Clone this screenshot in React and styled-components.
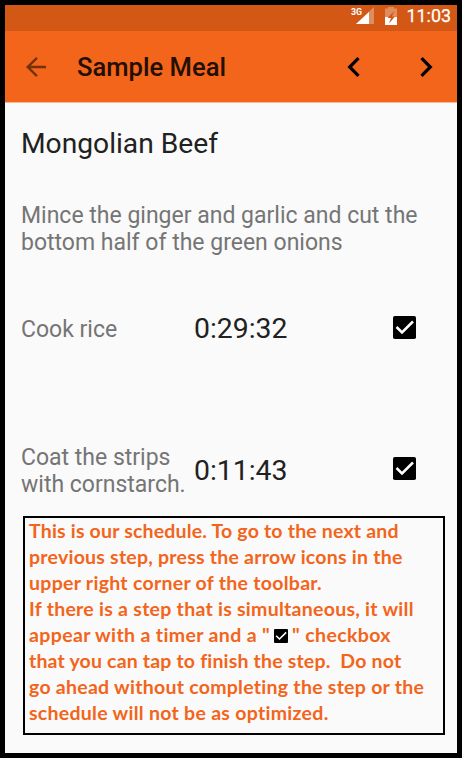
import React from 'react';
import styled, { createGlobalStyle } from 'styled-components';

const GlobalStyle = createGlobalStyle`
  body { margin: 0; background: #000; }
  * { box-sizing: border-box; }
`;

const Device = styled.div`
  width: 462px;
  height: 758px;
  border: 5px solid #000;
  background: #fafafa;
  font-family: Roboto, sans-serif;
  display: flex;
  flex-direction: column;
  overflow: hidden;
`;

const StatusBar = styled.div`
  flex: none;
  height: 26px;
  padding: 0 6px 4px 0;
  background: #d35815;
  color: #fff;
  display: flex;
  align-items: center;
  justify-content: flex-end;
`;

const StatusIcons = styled.svg`
  width: 47px;
  height: 20px;
  margin-right: 8px;
`;

const NetworkLabel = styled.text`
  font: 700 9.8px Roboto, sans-serif;
  fill: #fff;
`;

const Clock = styled.span`
  font-size: 17.9px;
  font-weight: 400;
  line-height: 22px;
  -webkit-text-stroke: 0.25px #fff;
`;

const Toolbar = styled.header`
  flex: none;
  height: 72px;
  padding: 0 20px 0 20px;
  background: #f2651a;
  border-bottom: 1px solid #f9b896;
  display: flex;
  align-items: center;
`;

const ToolbarIcon = styled.svg`
  width: 22px;
  height: 24px;
  flex: none;
  fill: none;
  stroke: ${(p) => (p.$muted ? '#74310e' : '#000')};
  stroke-width: ${(p) => (p.$muted ? 2.4 : 3.2)};
`;

const Title = styled.h1`
  flex: 1;
  margin: 1px 0 0 30px;
  font-size: 25.6px;
  font-weight: 500;
  line-height: 30px;
  color: #230f04;
`;

const Navigation = styled.nav`
  display: flex;
  gap: 50px;
`;

const Content = styled.main`
  padding: 24px 12px 0 16px;
  display: flex;
  flex-direction: column;
`;

const Recipe = styled.h2`
  margin: 0;
  font-size: 28.2px;
  font-weight: 400;
  line-height: 33px;
  color: #212121;
`;

const Step = styled.p`
  margin: 0;
  font-size: 23px;
  line-height: 27px;
  color: #757575;
  white-space: pre-line;
`;

const CurrentStep = styled(Step)`
  margin-top: 42px;
`;

const TimedRow = styled.section`
  display: grid;
  grid-template-columns: 173px 1fr 23px;
  align-items: center;
  height: 54px;
  margin-top: ${(p) => p.$gap}px;
  padding-right: 29px;
`;

const Timer = styled.span`
  font-size: 28.4px;
  line-height: 34px;
  color: #212121;
`;

const CheckIcon = styled.svg`
  display: block;
  width: 23px;
  height: 23px;
  margin-bottom: ${(p) => p.$lift || 0}px;
`;

const InlineCheck = styled(CheckIcon)`
  display: inline-block;
  width: 14px;
  height: 14px;
  margin: 0 4px 0 4px;
  vertical-align: -1px;
`;

const Hint = styled.aside`
  width: 422px;
  height: 219px;
  margin: 18px 0 0 2px;
  padding-left: 4px;
  border: 2px solid #000;
  color: #f2651a;
  font: 700 19.5px/26px Lato, sans-serif;
`;

const HintLine = styled.div`
  height: 26px;
  white-space: pre;
  letter-spacing: ${(p) => p.$track}px;
`;

function Mark() {
  return (
    <>
      <rect width="23" height="23" rx="1.8" fill="#000" />
      <path d="M3.5 11 9 16.5 20 5.5" fill="none" stroke="#fff" strokeWidth="2.5" />
    </>
  );
}

function Check({ lift }) {
  return <CheckIcon viewBox="0 0 23 23" $lift={lift}><Mark /></CheckIcon>;
}

export default function App() {
  return (
    <>
      <GlobalStyle />
      <Device>
        <StatusBar>
          <StatusIcons viewBox="0 0 47 20">
            <path d="M23 1v17H5z" fill="#e08d5d" />
            <path d="M18 6v12H5z" fill="#fff" />
            <path d="M0 0h12v8.5H0z" fill="#d35815" />
            <NetworkLabel x="0" y="8.5" textLength="11" lengthAdjust="spacingAndGlyphs">3G</NetworkLabel>
            <path d="M34 2.5h3V1h6v1.5h3V19H34z" fill="#e08d5d" />
            <path d="M34 11h12v8H34z" fill="#fff" />
            <path d="M43 5 36.5 12H40l-2 5.5 6-7H41z" fill="#d35815" />
          </StatusIcons>
          <Clock>11:03</Clock>
        </StatusBar>
        <Toolbar>
          <ToolbarIcon viewBox="0 0 22 24" $muted>
            <path d="M21 12H3M12 2.8 2.7 12l9.3 9.2" />
          </ToolbarIcon>
          <Title>Sample Meal</Title>
          <Navigation>
            <ToolbarIcon viewBox="0 0 22 24"><path d="m15.5 3.2-8.8 8.8 8.8 8.8" /></ToolbarIcon>
            <ToolbarIcon viewBox="0 0 22 24"><path d="m6.5 3.2 8.8 8.8-8.8 8.8" /></ToolbarIcon>
          </Navigation>
        </Toolbar>
        <Content>
          <Recipe>Mongolian Beef</Recipe>
          <CurrentStep>{'Mince the ginger and garlic and cut the\nbottom half of the green onions'}</CurrentStep>
          <TimedRow $gap={46}>
            <Step>Cook rice</Step>
            <Timer>0:29:32</Timer>
            <Check lift={3} />
          </TimedRow>
          <TimedRow $gap={88}>
            <Step>{'Coat the strips\nwith cornstarch.'}</Step>
            <Timer>0:11:43</Timer>
            <Check lift={5} />
          </TimedRow>
          <Hint>
            <HintLine $track={0.19}>This is our schedule. To go to the next and</HintLine>
            <HintLine $track={0.233}>previous step, press the arrow icons in the</HintLine>
            <HintLine $track={0.28}>upper right corner of the toolbar.</HintLine>
            <HintLine $track={0.268}>If there is a step that is simultaneous, it will</HintLine>
            <HintLine $track={0.36}>
              appear with a timer and a "<InlineCheck viewBox="0 0 23 23"><Mark /></InlineCheck>" checkbox
            </HintLine>
            <HintLine $track={0.18}>that you can tap to finish the step.  Do not</HintLine>
            <HintLine $track={0.265}>go ahead without completing the step or the</HintLine>
            <HintLine $track={0.28}>schedule will not be as optimized.</HintLine>
          </Hint>
        </Content>
      </Device>
    </>
  );
}
